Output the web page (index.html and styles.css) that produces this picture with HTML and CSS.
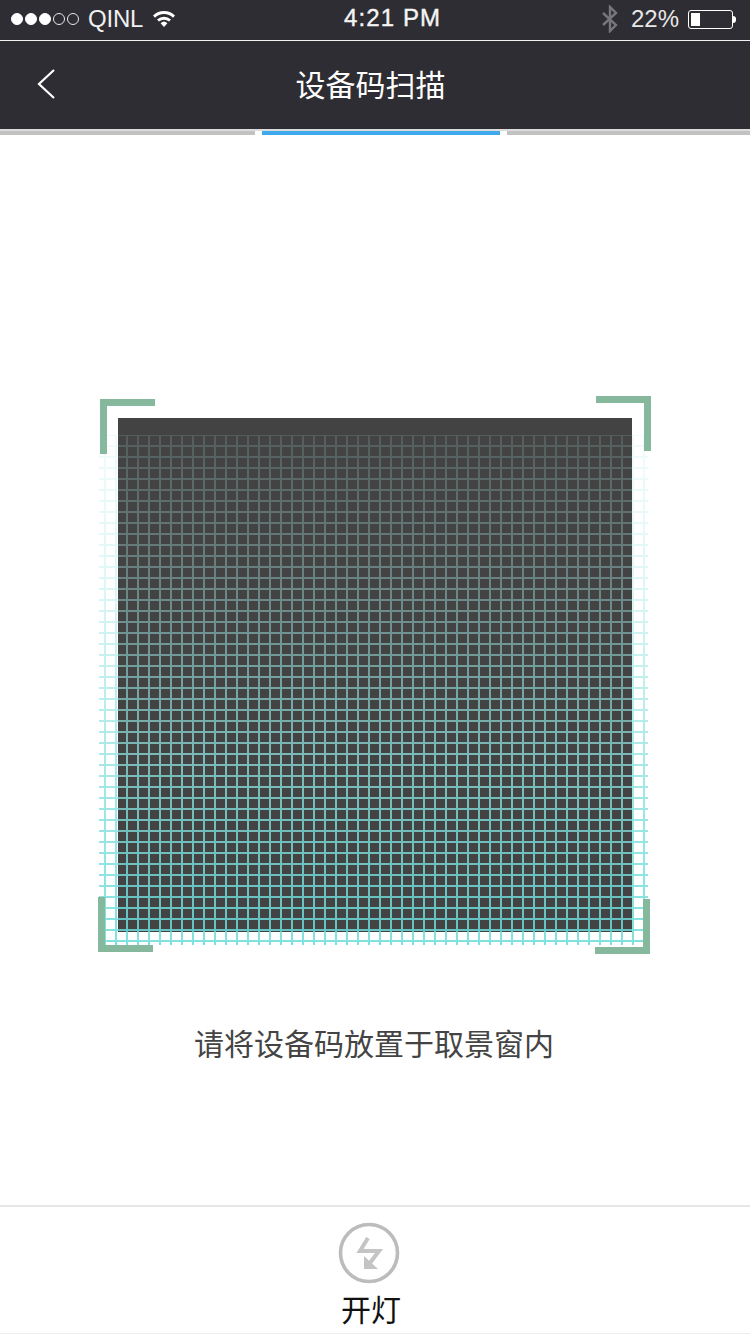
FILE: index.html
```html
<!DOCTYPE html>
<html lang="zh-CN">
<head>
  <meta charset="UTF-8" />
  <meta name="viewport" content="width=device-width, initial-scale=1.0"/>
  <title>设备码扫描</title>
  <link rel="stylesheet" href="styles.css">
</head>
<body>
  <div class="status-bar">
    <div class="status-left">
      <div class="signal">
        <span class="dot on"></span><span class="dot on"></span><span class="dot on"></span><span class="dot"></span><span class="dot"></span>
      </div>
      <span class="carrier">QINL</span>
      <svg class="wifi" width="24" height="18" viewBox="0 0 24 18">
        <path d="M1 6.5 A16 16 0 0 1 23 6.5 L21 8.7 A13 13 0 0 0 3 8.7 Z" fill="#fff"/>
        <path d="M5 10.5 A10.5 10.5 0 0 1 19 10.5 L17 12.6 A7.5 7.5 0 0 0 7 12.6 Z" fill="#fff"/>
        <path d="M8.6 14.2 A5 5 0 0 1 15.4 14.2 L12 18 Z" fill="#fff"/>
      </svg>
    </div>
    <div class="status-time">4:21 PM</div>
    <div class="status-right">
      <svg class="bluetooth" width="18" height="28" viewBox="0 0 18 28">
        <path d="M2 8 L15 20 L9 26 V2 L15 8 L2 20" fill="none" stroke="#77777b" stroke-width="2.4"/>
      </svg>
      <span class="battery-text">22%</span>
      <div class="battery">
        <div class="battery-body"><div class="battery-fill"></div></div>
        <div class="battery-tip"></div>
      </div>
    </div>
  </div>

  <nav class="nav-bar">
    <svg class="back" width="20" height="32" viewBox="0 0 20 32">
      <path d="M18 2 L3 16 L18 30" fill="none" stroke="#fff" stroke-width="2.2"/>
    </svg>
    <h1 class="nav-title">设备码扫描</h1>
  </nav>

  <div class="steps">
    <div class="step step-first"></div>
    <div class="step step-active"></div>
    <div class="step step-last"></div>
  </div>

  <main class="scan">
    <div class="scan-frame">
      <div class="scan-box"></div>
      <div class="scan-grid"></div>
      <div class="corner corner-tl"></div>
      <div class="corner corner-tr"></div>
      <div class="corner corner-bl"></div>
      <div class="corner corner-br"></div>
    </div>
    <p class="scan-hint">请将设备码放置于取景窗内</p>
  </main>

  <footer class="light-bar">
    <svg class="light-icon" width="62" height="62" viewBox="0 0 62 62">
      <circle cx="31" cy="31" r="28.5" fill="none" stroke="#bcbcbc" stroke-width="3.6"/>
      <path d="M30 16 L22 29 H41 L32 41" fill="none" stroke="#c4c4c4" stroke-width="4"/>
      <path d="M26 34 V47 H40 Z" fill="#c4c4c4"/>
    </svg>
    <div class="light-label">开灯</div>
  </footer>
</body>
</html>
```

FILE: styles.css
```css
* {
  box-sizing: border-box;
}

body {
  margin: 0;
  width: 750px;
  height: 1334px;
  overflow: hidden;
  background: #fff;
  font-family: "Liberation Sans", "Noto Sans CJK SC", sans-serif;
  display: flex;
  flex-direction: column;
}

.status-bar {
  height: 41px;
  padding-bottom: 2px;
  background: #2e2d33;
  border-bottom: 1px solid #f2f2f2;
  color: #fff;
  display: flex;
  align-items: center;
  position: relative;
  font-size: 24px;
}

.status-left {
  display: flex;
  align-items: center;
  padding-left: 11px;
}

.signal {
  display: flex;
  gap: 2px;
}

.dot {
  width: 12px;
  height: 12px;
  border-radius: 50%;
  border: 1px solid #e8e8e8;
}

.dot.on {
  background: #fff;
  border-color: #fff;
}

.carrier {
  margin-left: 9px;
  letter-spacing: -0.2px;
  color: #f0f0f0;
}

.wifi {
  margin-left: 9px;
  margin-top: -3px;
}

.status-time {
  position: absolute;
  left: 344px;
  top: 4px;
  font-size: 24px;
  letter-spacing: 1.1px;
  color: #f4f4f4;
  -webkit-text-stroke: 0.4px #f4f4f4;
}

.status-right {
  margin-left: auto;
  display: flex;
  align-items: center;
  padding-right: 14px;
}

.bluetooth {
  margin-right: 12px;
}

.battery-text {
  color: #e8e8e8;
}

.battery {
  display: flex;
  align-items: center;
  margin-left: 9px;
}

.battery-body {
  width: 45px;
  height: 19px;
  border: 1px solid #fff;
  border-radius: 3px;
  padding: 2px;
}

.battery-fill {
  width: 9px;
  height: 100%;
  background: #fff;
}

.battery-tip {
  width: 3px;
  height: 7px;
  background: #fff;
  border-radius: 0 3px 3px 0;
}

.nav-bar {
  height: 88px;
  padding-bottom: 5px;
  background: #2e2d33;
  display: flex;
  align-items: center;
  justify-content: center;
  position: relative;
}

.back {
  position: absolute;
  left: 36px;
  top: 27px;
}

.nav-title {
  margin: 0 0 0 -9px;
  font-size: 30px;
  font-weight: normal;
  color: #fff;
  font-family: "Noto Sans CJK SC", sans-serif;
}

.steps {
  height: 6px;
  border-top: 2px solid #dcdcdc;
  display: flex;
  background: #fff;
}

.step {
  height: 4px;
  background: #c2c2c2;
}

.step-first {
  width: 255px;
}

.step-active {
  width: 238px;
  margin: 0 7px;
  background: #3fa9ee;
}

.step-last {
  flex: 1;
}

.scan {
  flex: 1;
  display: flex;
  flex-direction: column;
  align-items: center;
}

.scan-frame {
  width: 560px;
  height: 560px;
  margin-top: 260px;
  align-self: flex-start;
  margin-left: 92px;
  position: relative;
}

.scan-box {
  position: absolute;
  left: 26px;
  top: 23px;
  width: 514px;
  height: 514px;
  background: #434343;
}

/* grid lines repeat every 11px; the colour goes pale to teal from the top down */
.scan-grid {
  position: absolute;
  left: 7px;
  top: 40px;
  width: 549px;
  height: 510px;
  background: linear-gradient(to bottom,
    rgba(170, 230, 225, 0.16) 0%,
    rgba(170, 235, 232, 0.38) 28%,
    rgba(140, 225, 222, 0.76) 64%,
    rgba(105, 220, 218, 0.85) 100%);
  -webkit-mask-image:
    linear-gradient(to right, #000 2px, transparent 2px),
    linear-gradient(to bottom, #000 2px, transparent 2px);
  mask-image:
    linear-gradient(to right, #000 2px, transparent 2px),
    linear-gradient(to bottom, #000 2px, transparent 2px);
  -webkit-mask-size: 11px 11px;
  mask-size: 11px 11px;
  -webkit-mask-position: 5px -1px;
  mask-position: 5px -1px;
}

.corner {
  position: absolute;
  width: 55px;
  height: 55px;
  border: 0 solid #86b89d;
}

.corner-tl {
  left: 8px;
  top: 4px;
  border-width: 7px 0 0 7px;
}

.corner-tr {
  left: 504px;
  top: 1px;
  border-width: 7px 7px 0 0;
}

.corner-bl {
  left: 6px;
  top: 502px;
  border-width: 0 0 7px 7px;
}

.corner-br {
  left: 503px;
  top: 504px;
  border-width: 0 7px 7px 0;
}

.scan-hint {
  margin: 65px 0 0 -2px;
  font-size: 30px;
  line-height: 44px;
  color: #444;
  font-family: "Noto Sans CJK SC", sans-serif;
}

.light-bar {
  height: 129px;
  border-top: 2px solid #e6e6e6;
  border-bottom: 1px solid #eee;
  display: flex;
  flex-direction: column;
  align-items: center;
  padding-top: 15px;
}

.light-icon {
  margin-left: -12px;
}

.light-label {
  font-size: 30px;
  line-height: 40px;
  margin-left: -8px;
  margin-top: 4px;
  color: #111;
  font-family: "Noto Sans CJK SC", sans-serif;
}
```
